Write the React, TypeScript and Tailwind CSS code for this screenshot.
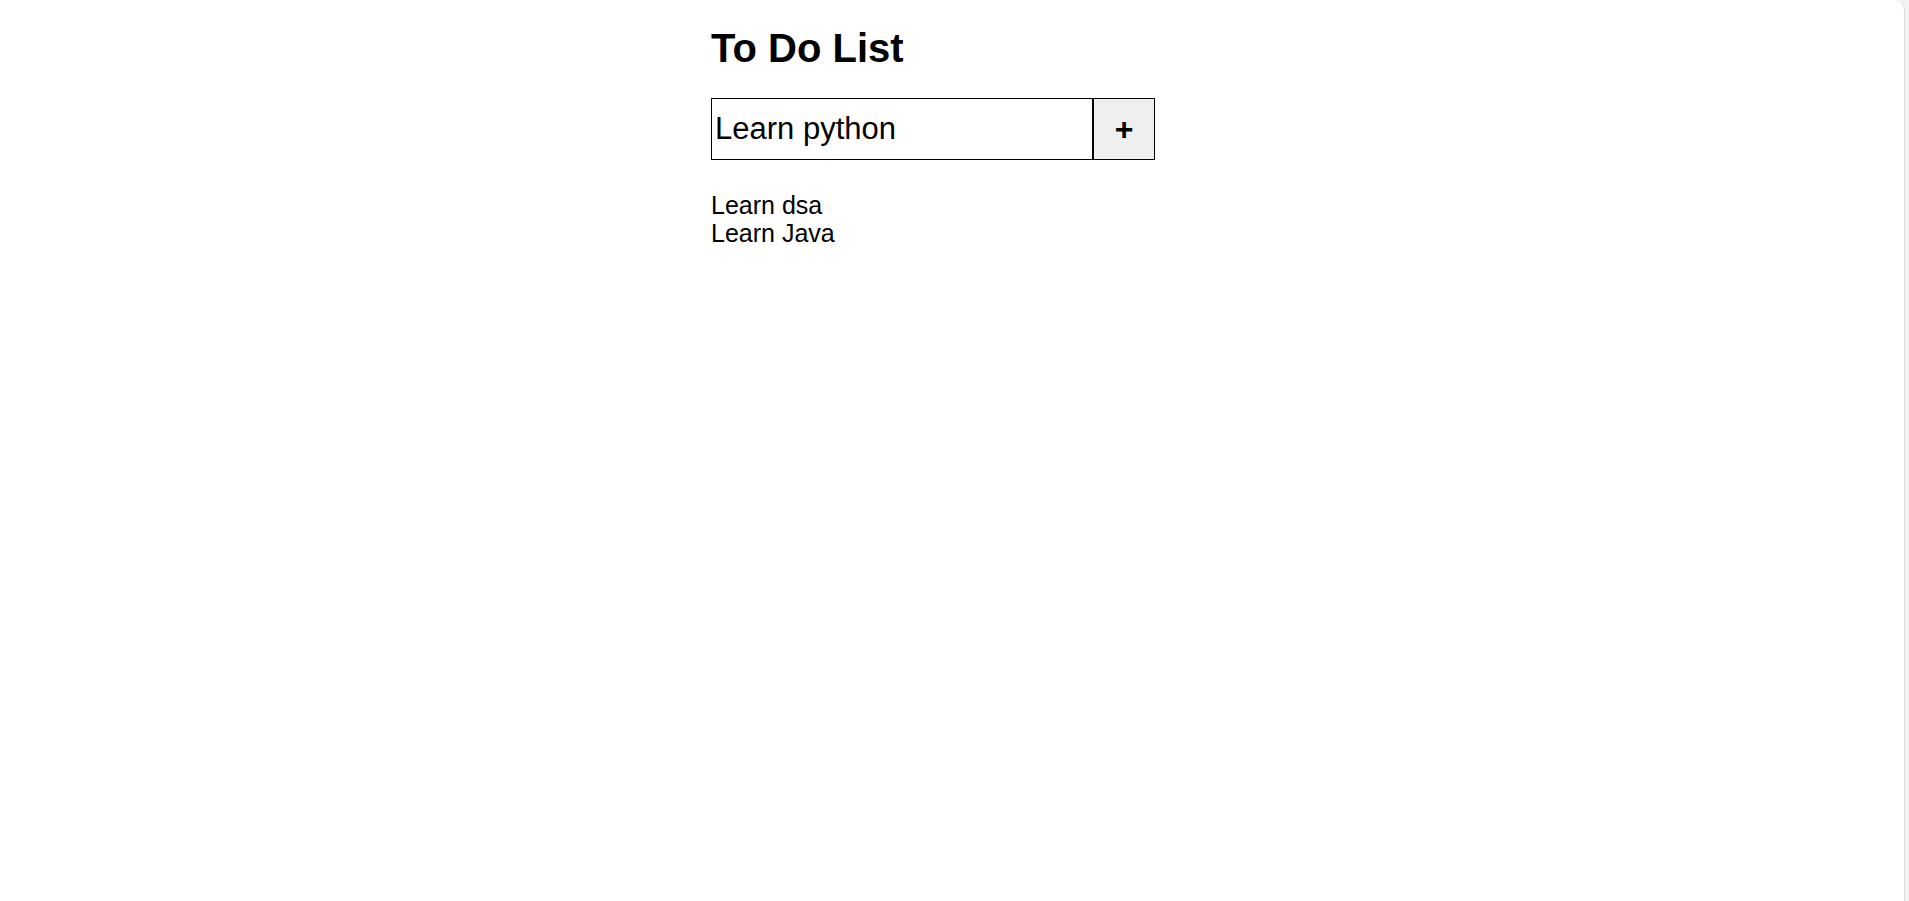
import { useState } from "react";

export default function App() {
  const [task, setTask] = useState("Learn python");
  const [todos, setTodos] = useState<string[]>(["Learn dsa", "Learn Java"]);

  const addTodo = () => {
    if (!task.trim()) return;
    setTodos([...todos, task]);
    setTask("");
  };

  return (
    <div className="flex h-screen bg-[#f3f3f3] font-['Liberation_Sans',Arial,sans-serif] text-black">
      <div className="mr-[4px] flex flex-1 justify-center rounded-tr-[10px] border-r border-[#dcdcdc] bg-white">
        <div className="w-[482px] pt-[25px]">
          {/* Heading */}
          <h1 className="text-[40px] font-bold leading-[46px]">To Do List</h1>

          {/* Input row */}
          <div className="mt-[27px] flex">
            <input
              value={task}
              onChange={(e) => setTask(e.target.value)}
              className="h-[62px] w-[382px] border border-black px-[3px] text-[31px] outline-none"
            />
            <button
              onClick={addTodo}
              className="h-[62px] w-[62px] border border-black bg-[#efefef] text-[32px] font-bold leading-none"
            >
              +
            </button>
          </div>

          {/* List */}
          <ul className="mt-[31px] text-[25px] leading-[28px]">
            {todos.map((todo, index) => (
              <li key={index}>{todo}</li>
            ))}
          </ul>
        </div>
      </div>
    </div>
  );
}
